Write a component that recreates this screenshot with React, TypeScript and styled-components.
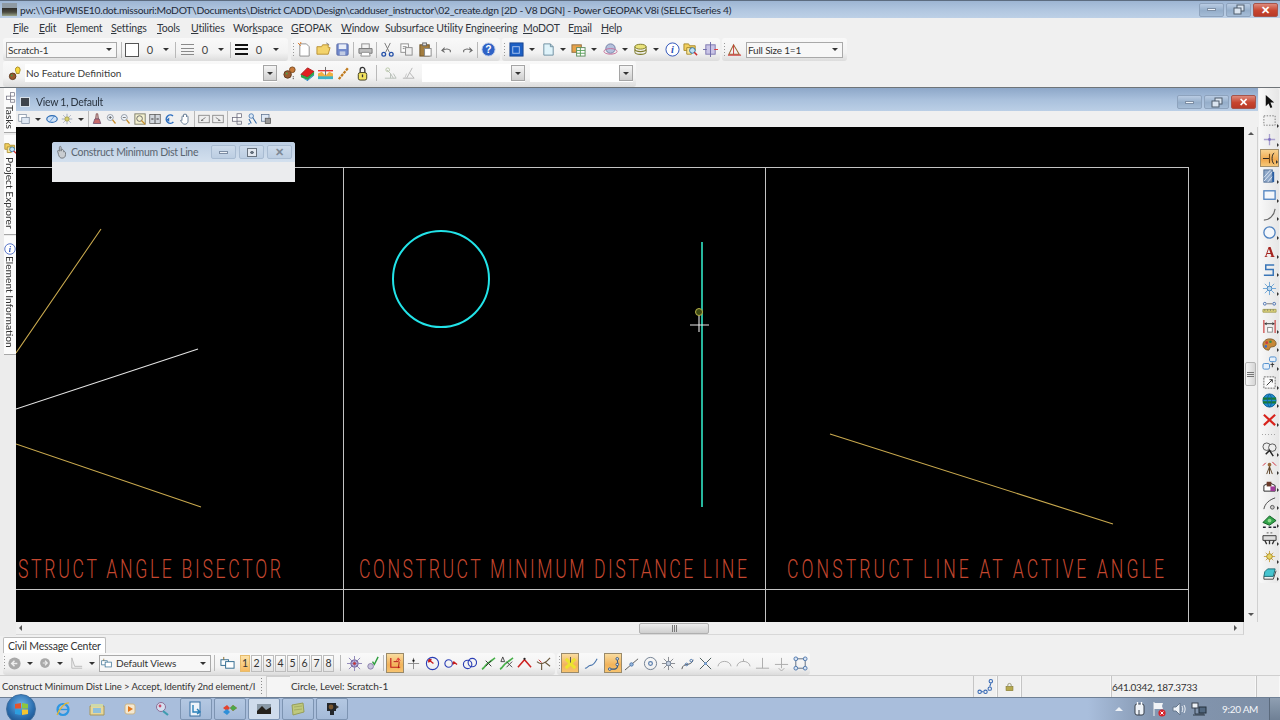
import React from 'react';
import styled, { createGlobalStyle } from 'styled-components';

const uiFont = "Lato, 'Liberation Sans', Arial, sans-serif";

const GlobalStyle = createGlobalStyle`
	html, body, #root {
		margin: 0;
		padding: 0;
		height: 100%;
		overflow: hidden;
	}
	body {
		font-family: ${uiFont};
		font-size: 11px;
		color: #2a2f36;
		background: #f0f0f0;
	}
`;

const Shell = styled.div`
	display: flex;
	flex-direction: column;
	width: 1280px;
	height: 720px;
	overflow: hidden;
	filter: blur(0.35px);
`;

const TitleBar = styled.div`
	display: flex;
	align-items: center;
	height: 18px;
	padding: 0 2px;
	box-sizing: border-box;
	border-top: 1px solid #5d6c80;
	background: linear-gradient(#9db5d3, #b3c8e1 60%, #bdd0e6);
`;

const AppThumb = styled.div`
	width: 15px;
	height: 13px;
	margin-right: 3px;
	background: linear-gradient(#8f9aa3 35%, #2c2a27 36%, #4a4a40 70%, #9ba58a);
`;

const TitleText = styled.span`
	font-size: 10.3px;
	letter-spacing: -0.28px;
	white-space: nowrap;
	color: #1f2a38;
`;

const WinButtons = styled.div<{ $gap?: number }>`
	display: flex;
	gap: ${(p) => p.$gap ?? 2}px;
	margin-left: auto;
`;

const WinBtn = styled.div<{ $close?: boolean; $faint?: boolean }>`
	display: flex;
	align-items: center;
	justify-content: center;
	width: 25px;
	height: 14px;
	border: 1px solid ${(p) => (p.$close ? '#a5554c' : p.$faint ? '#a9bcd2' : '#8ea3bd')};
	border-radius: 2px;
	box-sizing: border-box;
	background: ${(p) =>
		p.$close
			? 'linear-gradient(#dd8a7c, #c7452f 55%, #b93a28)'
			: p.$faint
				? 'linear-gradient(#cddbeb, #bccee2)'
				: 'linear-gradient(#b9cce3, #95aeca 55%, #a5bcd6)'};
`;

const MenuBar = styled.div`
	display: flex;
	align-items: center;
	height: 20px;
	padding-left: 13px;
	box-sizing: border-box;
	background: #f0f0f0;
`;

const MenuItem = styled.span<{ $gap: number }>`
	width: ${(p) => p.$gap}px;
	flex: none;
	white-space: nowrap;
	font-size: 10.5px;
	letter-spacing: -0.2px;
	color: #30363d;
`;

const ToolRow = styled.div<{ $h: number }>`
	display: flex;
	height: ${(p) => p.$h}px;
	box-sizing: border-box;
	background: #f0f0f0;
`;

const Band = styled.div<{ $w: number; $ml?: number; $pb?: number }>`
	display: flex;
	align-items: center;
	flex: none;
	width: ${(p) => p.$w}px;
	margin-left: ${(p) => p.$ml ?? 0}px;
	padding-bottom: ${(p) => p.$pb ?? 0}px;
	box-sizing: border-box;
	border-radius: 3px;
	background: linear-gradient(#f9f9f9, #f2f2f2 65%, #dcdcdc);
`;

const Slot = styled.div<{ $w?: number; $on?: boolean }>`
	display: flex;
	align-items: center;
	justify-content: center;
	flex: none;
	width: ${(p) => p.$w ?? 18}px;
	height: ${(p) => (p.$on ? 20 : 18)}px;
	box-sizing: border-box;
	font-size: 11px;
	color: #444;
	${(p) =>
		p.$on &&
		`background: linear-gradient(#f9dca0, #f2b35a 60%, #f6c36f);
		border: 1px solid #9a8a6a;`}
`;

const Caret = styled.i`
	width: 0;
	height: 0;
	border-left: 3px solid transparent;
	border-right: 3px solid transparent;
	border-top: 3px solid #333;
`;

const Grip = styled.div<{ $w?: number }>`
	flex: none;
	width: ${(p) => p.$w ?? 4}px;
	height: 14px;
	background: repeating-linear-gradient(#9a9a9a 0 1px, transparent 1px 3px) no-repeat center / 1px 100%;
`;

const Divider = styled.div<{ $w?: number }>`
	flex: none;
	width: ${(p) => p.$w ?? 3}px;
	height: 16px;
	background: linear-gradient(#b9b9b9, #b9b9b9) no-repeat center / 1px 100%;
`;

const Combo = styled.div<{ $w: number; $h?: number; $ml?: number }>`
	display: flex;
	align-items: center;
	flex: none;
	width: ${(p) => p.$w}px;
	height: ${(p) => p.$h ?? 16}px;
	margin-left: ${(p) => p.$ml ?? 0}px;
	padding-left: 1px;
	box-sizing: border-box;
	border: 1px solid #a9a9a9;
	background: #f7f7f7;
	font-size: 10px;
	letter-spacing: -0.2px;
	color: #333;
`;

const ComboCaret = styled(Caret)`
	margin-left: auto;
	margin-right: 4px;
	flex: none;
`;

const FeatureCombo = styled.div<{ $w: number; $ml?: number }>`
	display: flex;
	align-items: center;
	flex: none;
	width: ${(p) => p.$w}px;
	height: 18px;
	margin-left: ${(p) => p.$ml ?? 0}px;
	box-sizing: border-box;
	background: #fff;
	font-size: 10px;
	color: #3b3b3b;
`;

const ComboKey = styled.div`
	display: flex;
	align-items: center;
	justify-content: center;
	width: 14px;
	height: 16px;
	margin-left: auto;
	flex: none;
	border: 1px solid #a5a5a5;
	box-sizing: border-box;
	background: linear-gradient(#f5f5f5, #cfcfcf);
`;

const FeatureText = styled.span`
	padding-left: 1px;
`;

const RowRule = styled.div`
	height: 1px;
	background: #6f7478;
`;

const Main = styled.div`
	display: flex;
	flex: 1;
	min-height: 0;
`;

const TabStrip = styled.div`
	display: flex;
	flex-direction: column;
	flex: none;
	width: 16px;
	background: #ececec;
`;

const SideTab = styled.div<{ $h: number; $pt: number; $mb: number }>`
	display: flex;
	flex-direction: column;
	align-items: center;
	height: ${(p) => p.$h}px;
	margin: 0 0 ${(p) => p.$mb}px 4px;
	padding-top: ${(p) => p.$pt}px;
	box-sizing: border-box;
	border-bottom: 1px solid #a7a7a7;
	background: #fbfbfb;
`;

const SideLabel = styled.span<{ $mt: number }>`
	writing-mode: vertical-rl;
	font-size: 10.2px;
	margin-top: ${(p) => p.$mt}px;
	color: #333;
	white-space: nowrap;
`;

const ViewColumn = styled.div`
	display: flex;
	flex-direction: column;
	width: 1242px;
	flex: none;
`;

const ViewTitle = styled.div`
	display: flex;
	align-items: center;
	height: 23px;
	padding: 5px 2px 0 4px;
	box-sizing: border-box;
	background: linear-gradient(#8da7c8, #a9c0dc 50%, #bbcfe6);
`;

const ViewGlyph = styled.div`
	width: 8px;
	height: 8px;
	margin-right: 6px;
	border: 1px solid #d7e0ea;
	background: #3f444b;
`;

const ViewName = styled.span`
	font-size: 10.5px;
	letter-spacing: -0.3px;
	color: #2a3440;
`;

const ViewTools = styled.div`
	display: flex;
	align-items: center;
	height: 16px;
	background: #f0f0f0;
`;

const CanvasRow = styled.div`
	display: flex;
	height: 495px;
`;

const Canvas = styled.div`
	position: relative;
	width: 1228px;
	height: 495px;
	background: #000;
	flex: none;
`;

const Drawing = styled.svg`
	display: block;
`;

const ScrollColumn = styled.div`
	display: flex;
	flex-direction: column;
	align-items: center;
	width: 14px;
	flex: none;
	background: #f0f0f0;
	border-right: 1px solid #d0d0d0;
	box-sizing: border-box;
`;

const ThumbV = styled.div`
	display: flex;
	align-items: center;
	justify-content: center;
	width: 11px;
	height: 24px;
	margin-top: 227px;
	border: 1px solid #b5b5b5;
	border-radius: 2px;
	box-sizing: border-box;
	background: linear-gradient(90deg, #f6f6f6, #d6d6d6);
`;

const ArrowUp = styled.i`
	margin-top: 5px;
	border-left: 3px solid transparent;
	border-right: 3px solid transparent;
	border-bottom: 3px solid #555;
`;

const ArrowDown = styled.i`
	margin-top: auto;
	margin-bottom: 6px;
	border-left: 3px solid transparent;
	border-right: 3px solid transparent;
	border-top: 3px solid #555;
`;

const HScroll = styled.div`
	display: flex;
	align-items: center;
	height: 13px;
	width: 1228px;
	box-sizing: border-box;
	padding: 0 6px 0 3px;
	border-right: 1px solid #d0d0d0;
	border-bottom: 1px solid #d8d8d8;
	background: #f0f0f0;
`;

const ArrowLeft = styled.i`
	border-top: 3px solid transparent;
	border-bottom: 3px solid transparent;
	border-right: 3px solid #555;
`;

const ArrowRight = styled.i`
	margin-left: auto;
	border-top: 3px solid transparent;
	border-bottom: 3px solid transparent;
	border-left: 3px solid #555;
`;

const ThumbH = styled.div`
	display: flex;
	align-items: center;
	justify-content: center;
	width: 70px;
	height: 11px;
	margin-left: 617px;
	border: 1px solid #b0b0b0;
	border-radius: 2px;
	box-sizing: border-box;
	background: linear-gradient(#ededed, #cfcfcf);
`;

const Ridges = styled.div<{ $v?: boolean }>`
	width: ${(p) => (p.$v ? 7 : 5)}px;
	height: ${(p) => (p.$v ? 5 : 7)}px;
	background: ${(p) =>
		p.$v
			? 'repeating-linear-gradient(#777 0 1px, transparent 1px 2px)'
			: 'repeating-linear-gradient(90deg, #777 0 1px, transparent 1px 2px)'};
`;

const FloatDialog = styled.div`
	position: absolute;
	left: 36px;
	top: 15px;
	width: 243px;
	height: 40px;
	border-radius: 3px 3px 0 0;
	background: #ebecee;
	overflow: hidden;
`;

const DialogTitle = styled.div`
	display: flex;
	align-items: center;
	height: 20px;
	padding: 0 3px 0 3px;
	box-sizing: border-box;
	background: linear-gradient(#bccee3, #d3e0ee);
`;

const DialogName = styled.span`
	margin-left: 2px;
	font-size: 10.5px;
	letter-spacing: -0.3px;
	color: #5a6570;
`;

const PaletteColumn = styled.div`
	display: flex;
	flex-direction: column;
	flex: none;
	width: 22px;
	background: #f0f0f0;
`;

const Palette = styled.div`
	display: flex;
	flex-direction: column;
	align-items: center;
	width: 20px;
	margin-left: 1px;
	padding-top: 4.6px;
	border-radius: 3px;
	background: linear-gradient(90deg, #f8f8f8, #e6e6e6);
`;

const PaletteSlot = styled.div<{ $on?: boolean; $more?: boolean; $h?: number }>`
	position: relative;
	display: flex;
	align-items: center;
	justify-content: center;
	width: 19px;
	height: ${(p) => p.$h ?? 18.7}px;
	box-sizing: border-box;
	${(p) =>
		p.$on &&
		`background: linear-gradient(#f8d28f, #f0a94f 60%, #f6c878);
		border: 1px solid #a3906c;`}
	${(p) =>
		p.$more &&
		`&::after {
			content: '';
			position: absolute;
			right: 0;
			bottom: 2px;
			border-left: 2px solid #333;
			border-top: 2px solid transparent;
			border-bottom: 2px solid transparent;
		}`}
`;

const PaletteGrip = styled.div`
	width: 14px;
	height: 6px;
	margin: 3px 0;
	background: repeating-linear-gradient(90deg, #a5a5a5 0 1px, transparent 1px 3px) no-repeat center / 100% 1px;
`;

const TabRow = styled.div`
	display: flex;
	align-items: flex-end;
	height: 17px;
	padding-left: 3px;
	background: #f0f0f0;
`;

const MsgTab = styled.div`
	display: flex;
	align-items: center;
	width: 103px;
	height: 16px;
	padding-left: 4px;
	box-sizing: border-box;
	border: 1px solid #bcbcbc;
	border-bottom: none;
	border-radius: 2px 2px 0 0;
	background: #fff;
	font-size: 10.5px;
	letter-spacing: -0.22px;
	white-space: nowrap;
	color: #333;
`;

const PageBtn = styled.div<{ $on?: boolean }>`
	display: flex;
	align-items: center;
	justify-content: center;
	flex: none;
	width: ${(p) => (p.$on ? 10 : 11)}px;
	height: 17px;
	margin-right: 1px;
	border: 1px solid ${(p) => (p.$on ? '#e6bb6c' : '#bdbdbd')};
	box-sizing: border-box;
	font-size: 10.5px;
	color: #333;
	background: ${(p) => (p.$on ? 'linear-gradient(#fde2a8, #f6bb62)' : 'linear-gradient(#fbfbfb, #e4e4e4)')};
`;

const StatusBar = styled.div`
	display: flex;
	align-items: stretch;
	height: 22px;
	border-top: 1px solid #cfcfcf;
	box-sizing: border-box;
	background: #f0f0f0;
	font-size: 10px;
	color: #333;
`;

const Prompt = styled.div`
	width: 256px;
	padding-left: 2px;
	flex: none;
	white-space: nowrap;
	line-height: 21px;
	font-size: 9.5px;
	letter-spacing: -0.1px;
	box-sizing: border-box;
`;

const StatusCell = styled.div<{ $w: number; $first?: boolean }>`
	display: flex;
	align-items: center;
	justify-content: ${(p) => (p.$w < 40 ? 'center' : 'flex-start')};
	flex: none;
	width: ${(p) => p.$w}px;
	margin-left: ${(p) => (p.$first ? 'auto' : '0')};
	box-sizing: border-box;
	border-left: 1px solid #c5c5c5;
	border-right: 1px solid #f8f8f8;
	letter-spacing: -0.3px;
	white-space: nowrap;
`;

const StatusGrip = styled.div`
	width: 1px;
	margin: 2px 4px 2px 5px;
	flex: none;
	background: repeating-linear-gradient(#8a8a8a 0 1px, transparent 1px 3px);
`;

const StatusBox = styled.div`
	width: 23px;
	flex: none;
	border-left: 1px solid #cfcfcf;
	border-top: 1px solid #cfcfcf;
	background: #f5f5f5;
`;

const StatusText = styled.span<{ $ml?: number }>`
	margin-left: ${(p) => p.$ml ?? 0}px;
	line-height: 21px;
	letter-spacing: -0.1px;
	white-space: nowrap;
`;

const Taskbar = styled.div`
	display: flex;
	align-items: center;
	height: 23px;
	box-sizing: border-box;
	border-top: 1px solid #6f8095;
	background: linear-gradient(90deg, #a9bedc 0, #a9bedc 85%, #8497b1 90%, #7d8ea5 100%);
`;

const StartOrb = styled.div`
	display: flex;
	align-items: center;
	justify-content: center;
	width: 30px;
	height: 30px;
	margin-left: 6px;
	flex: none;
	border-radius: 50%;
	background: radial-gradient(circle at 50% 35%, #6fb3e8, #2b6fb0 55%, #173f73);
	border: 1px solid #3d6d9e;
	box-sizing: border-box;
`;

const TaskSlot = styled.div<{ $w: number; $ml?: number }>`
	display: flex;
	align-items: center;
	justify-content: center;
	flex: none;
	width: ${(p) => p.$w}px;
	margin-left: ${(p) => p.$ml ?? 0}px;
`;

const TaskBtn = styled.div<{ $bright?: boolean }>`
	display: flex;
	align-items: center;
	justify-content: center;
	flex: none;
	width: 32px;
	height: 22px;
	margin-right: 2px;
	border: 1px solid #7d94b2;
	border-radius: 2px;
	box-sizing: border-box;
	background: ${(p) => (p.$bright ? '#cfdcec' : 'linear-gradient(#b4c8e2, #a4bad8)')};
`;

const TrayArrow = styled.i`
	margin-left: 765px;
	border-left: 4px solid transparent;
	border-right: 4px solid transparent;
	border-bottom: 4px solid #eef2f7;
`;

const Clock = styled.span`
	margin-left: 13px;
	width: 44px;
	flex: none;
	color: #f4f6f9;
	font-size: 10px;
	letter-spacing: -0.3px;
	white-space: nowrap;
`;

const ShowDesktop = styled.div`
	width: 10px;
	height: 22px;
	margin-left: auto;
	flex: none;
	border-left: 1px solid #5b6a7c;
	background: linear-gradient(#8f9fb2, #6f8095);
`;

const icons: Record<string, React.ReactNode> = {
	new: <><path d="M3 2h7l3 3v10H3z" fill="#fff" stroke="#8d8d8d" /><path d="M1 1l3 3M4 0v2" stroke="#e0761c" /></>,
	open: <><path d="M1 5h5l1-2h6v3h2l-2 7H1z" fill="#f3d36b" stroke="#b99032" /><path d="M11 1l3 2" stroke="#777" /></>,
	save: <><rect x="2" y="2" width="12" height="12" rx="1" fill="#7189cc" stroke="#5a6ba5" /><rect x="4" y="2.5" width="8" height="5" fill="#e9eef8" /><rect x="5" y="10" width="6" height="4" fill="#c1cbe3" /></>,
	print: <><rect x="4" y="2" width="8" height="5" fill="#f3f3f3" stroke="#8e8e8e" /><path d="M1 7h14v5H1z" fill="#bdbdbd" stroke="#777" /><path d="M4 11h8l1 4H3z" fill="#fff" stroke="#8e8e8e" /></>,
	cut: <><path d="M5 1l5 10M11 1L6 11" stroke="#777" /><circle cx="4" cy="13" r="2" stroke="#2450a8" strokeWidth="1.4" /><circle cx="12" cy="13" r="2" stroke="#2450a8" strokeWidth="1.4" /></>,
	copy: <><rect x="2" y="2" width="8" height="9" fill="#fff" stroke="#8c8c8c" /><rect x="7" y="6" width="7" height="8" fill="#f0f0f0" stroke="#8c8c8c" /><path d="M4 5h4M4 7h2" stroke="#888" /></>,
	paste: <><rect x="2" y="3" width="10" height="12" fill="#a37d3f" stroke="#6d5228" /><rect x="5" y="1" width="4" height="3" fill="#ddd" stroke="#666" /><rect x="7" y="7" width="7" height="8" fill="#fff" stroke="#888" /></>,
	undo: <path d="M5 6l-3 3 3 2M3 9c3-2 6-2 8 0v2" stroke="#666" strokeWidth="1.1" />,
	redo: <path d="M11 6l3 3-3 2M13 9c-3-2-6-2-8 0v2" stroke="#666" strokeWidth="1.1" />,
	help: <><circle cx="8" cy="8" r="7" fill="#2f62c6" stroke="#c2cfe6" /><text x="8" y="12" fontSize="11" fontWeight="700" fill="#fff" textAnchor="middle" fontFamily="Liberation Sans">?</text></>,
	viewBlue: <><rect x="1" y="1" width="14" height="14" fill="#1c5fc4" stroke="#1b4690" /><rect x="4" y="5" width="7" height="7" stroke="#a9c4ef" /></>,
	docs: <><path d="M3 2h7l3 3v9H3z" fill="#dff3fa" stroke="#6d8ea0" /><path d="M10 2v3h3" stroke="#6d8ea0" /></>,
	table: <><rect x="1" y="3" width="10" height="8" fill="#e7a24a" stroke="#907040" /><rect x="6" y="6" width="9" height="9" fill="#fff" stroke="#5b8a5b" /><path d="M6 9h9M6 12h9M10 6v9" stroke="#5aa05a" /></>,
	globeLevel: <><ellipse cx="8" cy="7" rx="5" ry="5" fill="#b4c0dc" stroke="#6f7da3" /><ellipse cx="8" cy="10" rx="7" ry="3" fill="none" stroke="#c46f9a" /></>,
	layers: <><ellipse cx="8" cy="5" rx="6" ry="2.6" fill="#e9e27a" stroke="#7d7a2a" /><path d="M2 8c1 3 11 3 12 0M2 11c1 3 11 3 12 0" stroke="#7d7a2a" strokeWidth="1.2" /><path d="M2 5v6M14 5v6" stroke="#7d7a2a" /></>,
	info: <><circle cx="8" cy="8" r="7" fill="#fff" stroke="#2a4fb8" /><text x="8" y="12" fontSize="11" fontStyle="italic" fontWeight="700" fill="#2a4fb8" textAnchor="middle" fontFamily="Liberation Serif">i</text></>,
	search: <><path d="M1 2h5l1 2h6v5H1z" fill="#f2cf5f" stroke="#a98a2a" /><path d="M4 6h5v7H4z" fill="#f8e79c" stroke="#a98a2a" /><circle cx="10" cy="9" r="3" fill="#bfe0f2" stroke="#2c6fa5" /><path d="M12 11l3 3" stroke="#cc2b2b" strokeWidth="1.6" /></>,
	cube: <><rect x="3" y="3" width="10" height="10" fill="#c9c4e6" stroke="#7e78b0" /><path d="M8 0v16M0 8h4" stroke="#6d6aa8" /><path d="M12 8h4" stroke="#d33" /></>,
	scale: <><path d="M2 13L7 3l6 10z" stroke="#9a6a35" strokeWidth="1.1" /><path d="M1 14h14" stroke="#c33" strokeWidth="1.2" /><path d="M7 3v10" stroke="#c33" /></>,
	bulb: <><circle cx="6" cy="11" r="3.5" fill="#9a5a30" stroke="#5e3a1e" /><circle cx="5" cy="10" r="1" fill="#3fa04c" /><path d="M11 1a3 3 0 013 3c0 2-1 2-1 4h-3c0-2-1-2-1-4a3 3 0 012-3z" fill="#f6d83f" stroke="#a98a1c" /></>,
	feature: <><circle cx="6" cy="9" r="4" fill="#9a5a30" stroke="#5e3a1e" /><circle cx="5" cy="8" r="1" fill="#48a84f" /><circle cx="11" cy="4" r="3" fill="#c77a3a" stroke="#7c4b1f" /><path d="M12 11v4" stroke="#222" strokeDasharray="1 1" /></>,
	layerRed: <><path d="M1 9l7-7 7 4-7 6z" fill="#e31f1f" stroke="#a51515" /><path d="M1 9l7 3 7-6v3l-7 6-7-3z" fill="#2aa44a" /><path d="M3 13l5 2 7-6v1l-7 6z" fill="#1d7bc9" /></>,
	section: <><path d="M0 5h16" stroke="#e23636" strokeWidth="1.5" /><path d="M8 1v13" stroke="#666" /><path d="M0 8l4-2 4 4 4-4 4 2v4H0z" fill="#f0b040" /><path d="M0 11h16v3H0z" fill="#3cb3c9" /></>,
	rope: <path d="M3 14L13 2" stroke="#c07b1e" strokeWidth="2.4" strokeDasharray="3 1" />,
	lock: <><rect x="3.5" y="7" width="9" height="8" rx="2" fill="#f2e360" stroke="#3d3a1a" /><path d="M5.5 7V4a2.5 2.5 0 015 0v3" stroke="#333" strokeWidth="1.4" /><path d="M8 9v3" stroke="#333" strokeWidth="1.4" /></>,
	ghostA: <><path d="M2 13h12M4 4l4 4M8 8v5M11 8l3 5M8 8l3 5" stroke="#b7bfb7" /><circle cx="5" cy="4" r="2" stroke="#b9c6a8" /></>,
	ghostB: <><path d="M2 13h12M12 2L6 13M9 7l5 6" stroke="#b4b4b4" /><path d="M4 13l2-5" stroke="#c6c6c6" /></>,
	win: <><rect x="1" y="2" width="10" height="9" fill="#fff" stroke="#7d8ca0" /><rect x="5" y="6" width="10" height="8" fill="#dfe8f3" stroke="#7d8ca0" /></>,
	disk: <><ellipse cx="8" cy="8" rx="7" ry="4.5" fill="#cfe2f6" stroke="#2d6bb3" strokeWidth="1.5" /><path d="M4 13l8-10" stroke="#3d7ec8" /></>,
	sun: <><circle cx="8" cy="8" r="3" fill="#d9cf6a" stroke="#8c8a4a" /><path d="M8 1v3M8 12v3M1 8h3M12 8h3M3 3l2 2M11 11l2 2M13 3l-2 2M3 13l2-2" stroke="#8a96b0" /></>,
	paint: <><path d="M7 1h2l1 7H6z" fill="#c9a7a7" stroke="#7c4b4b" /><path d="M3 14l2-6h6l2 6z" fill="#c96a6a" stroke="#6c4b6b" /></>,
	zoomIn: <><circle cx="7" cy="6" r="4" fill="#eef4fa" stroke="#7d8794" /><path d="M5 6h4M7 4v4" stroke="#555" /><path d="M10 9l4 5" stroke="#c9902f" strokeWidth="1.7" /></>,
	zoomOut: <><circle cx="7" cy="6" r="4" fill="#eef4fa" stroke="#7d8794" /><path d="M5 6h4" stroke="#555" /><path d="M10 9l4 5" stroke="#c9902f" strokeWidth="1.7" /></>,
	fit: <><rect x="2" y="2" width="11" height="11" fill="#f4f1d0" stroke="#7d7d6a" /><circle cx="7" cy="7" r="3" stroke="#666" /><path d="M9 9l4 4" stroke="#c9902f" strokeWidth="1.4" /></>,
	split: <><rect x="1" y="2" width="14" height="12" fill="#d2d7dd" stroke="#555" /><path d="M8 2v12" stroke="#333" /><path d="M3 8h3M10 8h3" stroke="#333" strokeWidth="1.5" /></>,
	rotate: <><path d="M12 4a5.5 5.5 0 10.5 8" stroke="#2e6fc0" strokeWidth="2" /><path d="M7 6l-4 3 4 3z" fill="#2e6fc0" /></>,
	hand: <path d="M4 9V5a1 1 0 012 0V2.5a1 1 0 012 0V2.5a1 1 0 012 0V5a1 1 0 012 0v6c0 2-2 4-4 4-3 0-4-2-6-5 1-1 2 0 2 0z" fill="#fff" stroke="#47617f" />,
	prev: <><rect x="1" y="3" width="14" height="10" fill="#eee" stroke="#777" /><path d="M4 10l6-4M4 10h3" stroke="#666" /></>,
	next: <><rect x="1" y="3" width="14" height="10" fill="#eee" stroke="#777" /><path d="M5 6l6 4M11 10H8" stroke="#666" /></>,
	boxes: <><rect x="8" y="1" width="6" height="5" fill="#fff" stroke="#667" /><rect x="2" y="6" width="6" height="5" fill="#fff" stroke="#667" /><path d="M8 11h6v4H8z" stroke="#667" /></>,
	walk: <><circle cx="7" cy="4" r="3" fill="#dce8f5" stroke="#3a6ea8" /><path d="M9 6l5 8M4 8l3 6M5 14l-2 1" stroke="#3a6ea8" strokeWidth="1.4" /></>,
	copyView: <><rect x="2" y="2" width="10" height="9" fill="#dfe9f5" stroke="#5d7390" /><rect x="7" y="7" width="7" height="7" fill="#999" stroke="#555" /></>,
	arrow: <path d="M4 1v12l3-3 2 5 2-1-2-5h4z" fill="#111" />,
	selrect: <rect x="2" y="3" width="12" height="10" stroke="#777" strokeDasharray="1.5 1.5" />,
	crossPt: <><path d="M8 2v12M2 8h12" stroke="#a9a0cf" strokeWidth="1.4" /><circle cx="8" cy="8" r="1.5" fill="#7c6fbf" /></>,
	caliper: <><path d="M1 8h7" stroke="#222" /><path d="M8 3v10" stroke="#7a4a10" strokeWidth="1.2" /><path d="M13 2c-3 2-3 10 0 12" stroke="#222" /></>,
	pattern: <><rect x="2" y="1" width="9" height="13" fill="#8fa8c8" stroke="#4c6b92" /><path d="M2 9l7-8M2 13l9-10M6 14l6-7" stroke="#dfe9f5" /><path d="M12 3v11" stroke="#2a5fa5" strokeWidth="2" /></>,
	rect: <rect x="2" y="3" width="12" height="9" fill="#f4f7fb" stroke="#4f82c0" strokeWidth="1.4" />,
	arc: <path d="M2 14c6 0 11-5 12-12" stroke="#666" strokeWidth="1.2" />,
	circle: <circle cx="8" cy="8" r="6" fill="#f4f7fb" stroke="#4f82c0" strokeWidth="1.4" />,
	letterA: <text x="8" y="14" fontSize="15" fontWeight="700" fill="#a5241f" textAnchor="middle" fontFamily="Liberation Serif">A</text>,
	stair: <path d="M13 2H4v5h8v6H2" stroke="#3a76b8" strokeWidth="1.6" />,
	star: <><path d="M8 1v14M1 8h14M3 3l10 10M13 3L3 13" stroke="#6ea6d8" /><circle cx="8" cy="8" r="2.5" fill="#bcd7ee" stroke="#4a86bd" /></>,
	dotsYellow: <><circle cx="3" cy="4" r="1.5" stroke="#4a70b0" /><path d="M5 4h6" stroke="#777" /><circle cx="13" cy="4" r="1.5" stroke="#4a70b0" /><path d="M1 10h14v3H1z" fill="#dcd27a" stroke="#a8a25c" /><path d="M3 10v1.5M6 10v1.5M9 10v1.5M12 10v1.5" stroke="#776" /></>,
	dimension: <><path d="M2 1v14M14 1v14" stroke="#c44" strokeWidth="1.3" /><path d="M3 5h10M3 5l2-1M3 5l2 1M13 5l-2-1M13 5l-2 1" stroke="#333" /><rect x="6" y="9" width="5" height="5" fill="#fff" stroke="#888" /></>,
	palette: <><path d="M8 2c-4 0-7 3-7 6 0 4 3 6 6 6 1 0 1-2 2-3 2-1 6 0 6-4 0-3-3-5-7-5z" fill="#c78838" stroke="#7c5a26" /><circle cx="5" cy="6" r="1.4" fill="#cc3b3b" /><circle cx="9" cy="5" r="1.4" fill="#3b8a4b" /><circle cx="4" cy="10" r="1.4" fill="#3b6fcc" /></>,
	linked: <><rect x="8" y="1" width="7" height="5" rx="1.5" fill="#e6f0fa" stroke="#4b8ccc" /><rect x="1" y="8" width="7" height="6" rx="1.5" fill="#e6f0fa" stroke="#4b8ccc" /><path d="M9 9h4M11 7v5" stroke="#333" /></>,
	frameArrow: <><rect x="2" y="2" width="12" height="12" fill="#fbfbfb" stroke="#666" strokeDasharray="2 1" /><path d="M5 11l6-6M8 5h3v3" stroke="#333" /></>,
	globe: <><circle cx="8" cy="8" r="7" fill="#1f8fd0" stroke="#0f5e96" /><path d="M1 6h14M1 10h14" stroke="#1a7a36" strokeWidth="2.2" /><path d="M8 1c-3 3-3 11 0 14M8 1c3 3 3 11 0 14" stroke="#0f5e96" /></>,
	redX: <path d="M2 3l12 11M14 3L2 14" stroke="#d8231c" strokeWidth="2.3" />,
	wheels: <><circle cx="5" cy="5" r="4" fill="#eee" stroke="#555" /><circle cx="11" cy="6" r="4" fill="#eee" stroke="#555" /><path d="M4 13l4-4 4 6" stroke="#222" strokeWidth="1.6" /></>,
	surveyor: <><circle cx="8" cy="5" r="2" fill="#9a6a3a" /><path d="M8 7l-3 8M8 7l3 8M8 7v8" stroke="#5a4024" /><path d="M1 6l3-3M11 2l4 4" stroke="#c23" /></>,
	stack: <><path d="M2 8l6-3 6 3v6H2z" fill="#fff" stroke="#222" /><path d="M5 4h5v5H5z" fill="#6a3a2a" /><rect x="9" y="9" width="5" height="5" fill="#a03a9a" /></>,
	curvePt: <><path d="M2 14C3 8 8 4 14 2" stroke="#444" /><circle cx="11" cy="12" r="2" fill="#ccc" stroke="#555" /></>,
	money: <><path d="M1 9l7-7 7 5-7 5z" fill="#34a34a" stroke="#0d5d22" /><circle cx="8" cy="7" r="2" fill="#8fdb8f" /><path d="M1 14h3M7 14h3M12 14h3" stroke="#223" strokeWidth="1.6" /></>,
	road: <><path d="M1 5h14v5H1z" fill="#ddd" stroke="#333" /><path d="M3 10l2 4M13 10l-2 4M8 10v4" stroke="#333" strokeWidth="1.4" /><path d="M5 2h2M9 2h2" stroke="#555" /></>,
	spark: <><path d="M8 2v12M2 8h12M4 4l8 8M12 4l-8 8" stroke="#c9a54a" /><circle cx="8" cy="8" r="3" fill="#e7d465" stroke="#a98b2a" /></>,
	sheet: <><path d="M3 5l3-3h8l-2 8H2z" fill="#46c4cf" stroke="#1a6a72" /><path d="M2 10v3h10l3-9" stroke="#444" /></>,
	backNav: <><circle cx="8" cy="8" r="6.5" fill="#a9a9a9" /><path d="M11 8H5M8 5L5 8l3 3" stroke="#eee" strokeWidth="1.6" /></>,
	fwdNav: <><circle cx="8" cy="8" r="6.5" fill="#a9a9a9" /><path d="M5 8h6M8 5l3 3-3 3" stroke="#eee" strokeWidth="1.6" /></>,
	angle: <path d="M3 2l3 9h8M3 2v11h11" stroke="#b9b9b9" />,
	twoWin: <><rect x="1" y="4" width="8" height="6" fill="#fff" stroke="#2f6a8f" /><rect x="6" y="6" width="9" height="7" fill="#fff" stroke="#2f6a8f" /><path d="M4 1v3" stroke="#8a6a2a" /></>,
	gear: <><circle cx="8" cy="8" r="4" fill="#bcb0da" stroke="#6a5e98" /><path d="M8 0v16M0 8h16M2 2l12 12M14 2L2 14" stroke="#8d84b5" /><circle cx="8" cy="8" r="1.4" fill="#c33" /></>,
	check: <><circle cx="6" cy="11" r="3" fill="#c9c4dd" stroke="#877fa8" /><path d="M8 6l2 3 4-8" stroke="#2f9e3f" strokeWidth="1.5" /></>,
	axis: <><path d="M3 2v10h10" stroke="#c21d1d" strokeWidth="1.2" /><path d="M12 6l-1 7M6 6h5" stroke="#b21515" /><path d="M11 3v3M9 5l2-3 2 3" stroke="#d33" /></>,
	crossDot: <><path d="M8 2v12M2 8h12" stroke="#8a8a8a" /><circle cx="8" cy="5" r="1.2" fill="#111" /></>,
	circArrow: <><circle cx="8" cy="8" r="6.5" stroke="#2c3fb5" strokeWidth="1.2" /><path d="M4 4l5 4M4 4h3M4 4v3" stroke="#c81e1e" strokeWidth="1.4" /></>,
	circTick: <><circle cx="6" cy="8" r="4" stroke="#2c3fb5" strokeWidth="1.2" /><path d="M11 6l4 3M11 6v3" stroke="#c81e1e" strokeWidth="1.4" /></>,
	twoCirc: <><circle cx="6" cy="9" r="4.5" stroke="#2c3fb5" strokeWidth="1.2" /><circle cx="11" cy="7" r="4.5" stroke="#2c3fb5" strokeWidth="1.2" /></>,
	snakeA: <><path d="M1 14c3-1 4-5 6-6 2-1 5-4 8-6" stroke="#49b04a" strokeWidth="1.8" /><path d="M5 5l6 6M11 5l-6 6" stroke="#333" /></>,
	snakeB: <><path d="M1 14c3-1 4-5 6-6 2-1 5-4 8-6" stroke="#49b04a" strokeWidth="1.8" /><path d="M4 1L2 6h4zM8 6l6 6M14 6l-6 6" stroke="#444" /></>,
	peak: <><path d="M1 12L8 4l7 8" stroke="#cd2121" strokeWidth="1.6" /><circle cx="8" cy="3" r="1.2" fill="#222" /></>,
	branch: <><path d="M1 6c4 4 9 2 14-4M6 8v7M10 7l5 4" stroke="#6b5a3e" strokeWidth="1.2" /><path d="M3 4l3 3" stroke="#c22" /></>,
	xYellow: <><path d="M3 3l10 10M13 3L3 13" stroke="#ece32f" strokeWidth="3.4" /><path d="M8 1v6" stroke="#555" /></>,
	curveA: <path d="M1 13c3 0 3-3 6-3s5-3 7-7" stroke="#4975ad" strokeWidth="1.1" />,
	boxCurve: <><path d="M3 14h6c4 0 4-5 3-11" stroke="#35567f" strokeWidth="1.1" /><circle cx="12" cy="3" r="1.4" fill="#d8e4f0" stroke="#35567f" /><circle cx="12" cy="9" r="1.4" fill="#d8e4f0" stroke="#35567f" /><circle cx="4" cy="14" r="1.4" fill="#d8e4f0" stroke="#35567f" /></>,
	slash: <><path d="M1 15L15 3" stroke="#555" /><circle cx="8" cy="9" r="1.8" fill="#9ab8dc" stroke="#4d76ac" /></>,
	target: <><circle cx="8" cy="8" r="6.5" stroke="#6d7c8f" /><circle cx="8" cy="8" r="2" stroke="#5a7ead" strokeWidth="1.3" /></>,
	gearBlue: <><path d="M8 1v14M1 8h14M3 3l10 10M13 3L3 13" stroke="#86898e" /><circle cx="8" cy="8" r="2.4" fill="#c5d0e0" stroke="#6f7f95" /></>,
	sCurve: <><path d="M2 14c1-8 10-2 12-10" stroke="#555" /><circle cx="7" cy="9" r="1.4" stroke="#4d76ac" /><circle cx="12" cy="5" r="1.4" stroke="#4d76ac" /></>,
	xBlue: <><path d="M2 2l12 12M14 2L2 14" stroke="#455" /><circle cx="8" cy="8" r="1.6" fill="#7aa4d8" /></>,
	arcBase: <path d="M1 11c1-7 13-7 14 0" stroke="#aaa" />,
	arcTop: <><path d="M1 11c1-7 13-7 14 0" stroke="#aaa" /><path d="M8 6v-3" stroke="#aaa" /></>,
	perp: <path d="M1 13h14M8 2v11" stroke="#aaa" />,
	perpDot: <><path d="M1 9h14M8 2v11" stroke="#aaa" /><path d="M5 13l3 3 3-3" stroke="#aaa" /></>,
	square4: <><rect x="3" y="3" width="10" height="10" stroke="#5c6b80" /><circle cx="3" cy="3" r="2" fill="#d8e4f4" stroke="#4d76ac" /><circle cx="13" cy="3" r="2" fill="#d8e4f4" stroke="#4d76ac" /><circle cx="3" cy="13" r="2" fill="#d8e4f4" stroke="#4d76ac" /><circle cx="13" cy="13" r="2" fill="#d8e4f4" stroke="#4d76ac" /></>,
	ie: <><circle cx="8" cy="8.5" r="5.5" stroke="#2d97e2" strokeWidth="2.2" /><path d="M3 8.5h10" stroke="#2d97e2" strokeWidth="1.4" /><path d="M14 2c-4-1-9 5-12 12" stroke="#e7b62d" strokeWidth="1.2" /></>,
	explorer: <><path d="M1 5h14v9H1z" fill="#e6d79a" stroke="#a7965a" /><path d="M2 3h12v3H2z" fill="#cfd9a8" /><rect x="4" y="7" width="8" height="5" fill="#8fc0dc" /></>,
	media: <><rect x="3" y="3" width="10" height="10" rx="2" fill="#f4e8d0" stroke="#c9b488" /><path d="M6 5l5 3-5 3z" fill="#e4761a" /></>,
	trayPic: <><circle cx="6" cy="6" r="4.5" fill="#d5dff0" stroke="#8c6f96" /><circle cx="5" cy="5" r="1.4" fill="#cc4a6a" /><path d="M8 10l5 4" stroke="#3e9cb0" strokeWidth="2.2" /></>,
	pinned1: <><rect x="2" y="1" width="10" height="14" fill="#edf3fa" stroke="#336d9f" /><path d="M5 4v7h6M9 8l3 3-3 2" stroke="#2980b9" strokeWidth="1.4" /></>,
	pinned2: <><path d="M1 7l4-3 3 3 3-3 4 3-4 3-3-3-3 3z" fill="#e4432f" /><path d="M1 11l4-3 3 3-3 3z" fill="#2f8fd8" /><path d="M8 7l3-3 4 3-4 3z" fill="#4aa84a" /></>,
	pinned3: <><path d="M1 3h14v10H1z" fill="#8a9aa8" /><path d="M1 10l5-5 4 4 5-3v7H1z" fill="#26221d" /></>,
	pinned4: <><path d="M2 4l11-2 1 9-11 3z" fill="#bfc97c" stroke="#969e5a" /><path d="M4 6l8-1M4 9l8-1" stroke="#a5ad66" /></>,
	pinned5: <><rect x="3" y="2" width="9" height="8" fill="#23262a" /><circle cx="7" cy="6" r="2.4" fill="#77552f" /><path d="M6 10h4v4H6z" fill="#23262a" /><path d="M12 4l3 2-3 2z" fill="#3a3a3a" /></>,
	power: <><rect x="4" y="3" width="9" height="11" rx="2" fill="#eef2f7" stroke="#39414c" /><path d="M6.5 1v3M10.5 1v3" stroke="#fff" strokeWidth="1.4" /><path d="M8 9v5" stroke="#39414c" /></>,
	flag: <><path d="M3 1v14" stroke="#eee" /><path d="M3 2h9l-1 3 1 3H3z" fill="#f1f3f6" /><circle cx="11" cy="12" r="3.6" fill="#d7232b" /><path d="M9.5 10.5l3 3M12.5 10.5l-3 3" stroke="#fff" /></>,
	speaker: <><path d="M2 6h3l4-4v12l-4-4H2z" fill="#eef2f7" stroke="#67788d" /><path d="M11 5c1 2 1 4 0 6M13 4c1.5 2.5 1.5 5.5 0 8" stroke="#eef2f7" /></>,
	network: <><rect x="1" y="2" width="6" height="5" fill="#eef2f7" stroke="#3a4350" /><rect x="8" y="6" width="7" height="6" fill="#51677f" stroke="#25303d" /><path d="M4 7v6h9M2 14h12" stroke="#2e3a47" /></>,
	curveStatus: <><circle cx="2.5" cy="13" r="1.6" stroke="#3668b4" /><circle cx="8" cy="13" r="1.6" stroke="#3668b4" /><circle cx="13" cy="3" r="1.6" stroke="#3668b4" /><circle cx="12" cy="10" r="1.6" stroke="#3668b4" /><path d="M4 13h2M13 5l-1 3" stroke="#3668b4" /></>,
	padlock: <><rect x="3" y="8" width="10" height="6" fill="#b6a94d" stroke="#8a7e35" /><path d="M5.5 8V6a2.5 2.5 0 015 0v2" stroke="#8d8d6a" strokeWidth="1.2" /></>,
	gesture: <path d="M5 3c0-2 2-2 2 0v4-1c0-2 3-1 3 1v1c1-1 2 0 2 1v2c0 3-2 4-4 4s-3-1-4-4L3 7c0-1 1-1 2 0z" fill="#c9cdd1" stroke="#6b7177" />,
};

const Ico = ({ n, s = 16 }: { n: string; s?: number }) => (
	<svg width={s} height={s} viewBox="0 0 16 16" fill="none">
		{icons[n]}
	</svg>
);

const MinGlyph = styled.div`
	width: 9px;
	height: 3px;
	background: #eef3f8;
	border: 1px solid #7d8ea4;
	box-sizing: border-box;
`;

const CloseGlyph = styled.span<{ $muted?: boolean }>`
	font-size: 11px;
	line-height: 12px;
	font-weight: 700;
	color: ${(p) => (p.$muted ? '#7f8a96' : '#fff')};
`;

const DialogRestore = styled.div`
	width: 8px;
	height: 7px;
	border: 1px solid #67727e;
	background: radial-gradient(#67727e 1.5px, #e3e9f0 2px);
`;

const RestoreGlyph = () => (
	<svg width="12" height="11" viewBox="0 0 12 11" fill="none">
		<rect x="4" y="1" width="7" height="6" fill="#dbe5f0" stroke="#4f5c6c" />
		<rect x="1" y="4" width="7" height="6" fill="#dbe5f0" stroke="#4f5c6c" />
	</svg>
);

const WindowControls = () => (
	<WinButtons>
		<WinBtn><MinGlyph /></WinBtn>
		<WinBtn><RestoreGlyph /></WinBtn>
		<WinBtn $close><CloseGlyph>✕</CloseGlyph></WinBtn>
	</WinButtons>
);

const menus: [React.ReactNode, number][] = [
	[<><u>F</u>ile</>, 26],
	[<><u>E</u>dit</>, 27],
	[<>E<u>l</u>ement</>, 45],
	[<><u>S</u>ettings</>, 46],
	[<><u>T</u>ools</>, 34],
	[<><u>U</u>tilities</>, 42],
	[<>Wor<u>k</u>space</>, 58],
	[<><u>G</u>EOPAK</>, 50],
	[<><u>W</u>indow</>, 44],
	[<>Subsurface Utility Engineering</>, 138],
	[<><u>M</u>oDOT</>, 45],
	[<>E<u>m</u>ail</>, 33],
	[<><u>H</u>elp</>, 30],
];

const ToolSlots = ({ items }: { items: [string, number][] }) => (
	<>
		{items.map(([name, w], i) =>
			name === '^' ? (
				<Slot key={i} $w={w}><Caret /></Slot>
			) : name === '|' ? (
				<Divider key={i} $w={w} />
			) : name === ':' ? (
				<Grip key={i} $w={w} />
			) : name === '_' ? (
				<Slot key={i} $w={w} />
			) : name.startsWith('*') ? (
				<Slot key={i} $w={w} $on><Ico n={name.slice(1)} s={15} /></Slot>
			) : (
				<Slot key={i} $w={w}><Ico n={name} s={w < 16 ? 12 : 15} /></Slot>
			),
		)}
	</>
);

const Swatch = styled.div`
	width: 12px;
	height: 12px;
	background: #fff;
	border: 1px solid #555;
`;

const StyleLines = styled.div<{ $heavy?: boolean }>`
	width: 13px;
	height: 11px;
	background: ${(p) =>
		p.$heavy
			? 'repeating-linear-gradient(#111 0 2px, transparent 2px 4.5px)'
			: 'repeating-linear-gradient(#8a8a8a 0 1px, transparent 1px 3.5px)'};
`;

const paletteTop: [string, boolean?, boolean?][] = [
	['arrow'], ['selrect', true], ['crossPt', true], ['caliper', true, true], ['pattern', true], ['rect', true],
	['arc', true], ['circle', true], ['letterA', true], ['stair', true], ['star', true], ['dotsYellow', false],
	['dimension', true], ['palette', true], ['linked', true], ['frameArrow', true], ['globe', true], ['redX', true],
];
const paletteBottom: string[] = ['wheels', 'surveyor', 'stack', 'curvePt', 'money', 'road', 'spark', 'sheet'];

const viewTools: [string, number][] = [
	['_', 1], ['win', 14], ['^', 14], ['disk', 14], ['sun', 15], ['^', 13], ['|', 3], ['paint', 14], ['zoomIn', 14], ['zoomOut', 14],
	['fit', 16], ['split', 14], ['rotate', 15], ['hand', 15], ['|', 5], ['prev', 14], ['next', 14], ['|', 5], ['boxes', 14], ['walk', 15], ['copyView', 14],
];

const CadLabel = ({ x, w, children }: { x: number; w: number; children: string }) => (
	<text
		transform={`translate(${x} 578) scale(0.68 1)`}
		textLength={(w - 2) / 0.68}
		lengthAdjust="spacing"
		fontFamily="Roboto, 'Liberation Sans', sans-serif"
		fontWeight={300}
		fontSize={26}
		fill="#c4472f"
	>
		{children}
	</text>
);

export default function App() {
	return (
		<Shell>
			<GlobalStyle />
			<TitleBar>
				<AppThumb />
				<TitleText>
					pw:\\GHPWISE10.dot.missouri:MoDOT\Documents\District CADD\Design\cadduser_instructor\02_create.dgn [2D - V8 DGN] - Power GEOPAK V8i (SELECTseries 4)
				</TitleText>
				<WindowControls />
			</TitleBar>
			<MenuBar>
				{menus.map(([label, w], i) => (
					<MenuItem key={i} $gap={w}>{label}</MenuItem>
				))}
			</MenuBar>
			<ToolRow $h={23}>
				<Band $w={285} $ml={3}>
					<Combo $w={111} $ml={3}>Scratch-1<ComboCaret /></Combo>
					<Divider $w={8} />
					<Slot $w={14}><Swatch /></Slot>
					<Slot $w={22}>0</Slot>
					<Slot $w={10}><Caret /></Slot>
					<Divider $w={9} />
					<Slot $w={14}><StyleLines /></Slot>
					<Slot $w={22}>0</Slot>
					<Slot $w={10}><Caret /></Slot>
					<Divider $w={8} />
					<Slot $w={14}><StyleLines $heavy /></Slot>
					<Slot $w={22}>0</Slot>
					<Slot $w={12}><Caret /></Slot>
				</Band>
				<Band $w={209} $ml={3}>
					<ToolSlots items={[[':', 4], ['new', 18], ['open', 20], ['save', 19], ['|', 3], ['print', 20], ['|', 3], ['cut', 18], ['copy', 20], ['paste', 18], ['|', 4], ['undo', 18], ['redo', 20], ['|', 3], ['help', 18]]} />
				</Band>
				<Band $w={218} $ml={2}>
					<ToolSlots items={[[':', 5], ['viewBlue', 18], ['^', 14], ['docs', 18], ['^', 12], ['table', 18], ['^', 14], ['globeLevel', 18], ['^', 12], ['layers', 18], ['^', 14], ['info', 18], ['search', 18], ['_', 2], ['cube', 18]]} />
				</Band>
				<Band $w={125} $ml={2}>
					<ToolSlots items={[[':', 4], ['scale', 16], ['_', 4]]} />
					<Combo $w={97}>Full Size 1=1<ComboCaret /></Combo>
				</Band>
			</ToolRow>
			<ToolRow $h={26}>
				<Band $w={633} $ml={3} $pb={2}>
					<ToolSlots items={[['_', 3], ['bulb', 17], ['_', 2]]} />
					<FeatureCombo $w={252}>
						<FeatureText>No Feature Definition</FeatureText>
						<ComboKey><Caret /></ComboKey>
					</FeatureCombo>
					<ToolSlots items={[['_', 3], ['feature', 18], ['layerRed', 19], ['section', 17], ['rope', 19], ['lock', 18], ['|', 10], ['ghostA', 18], ['ghostB', 18], ['_', 5]]} />
					<FeatureCombo $w={103}><ComboKey><Caret /></ComboKey></FeatureCombo>
					<FeatureCombo $w={103} $ml={5}><ComboKey><Caret /></ComboKey></FeatureCombo>
				</Band>
			</ToolRow>
			<RowRule />
			<Main>
				<TabStrip>
					<SideTab $h={45} $pt={4} $mb={2}>
						<Ico n="boxes" s={11} />
						<SideLabel $mt={2}>Tasks</SideLabel>
					</SideTab>
					<SideTab $h={100} $pt={7} $mb={1}>
						<Ico n="search" s={13} />
						<SideLabel $mt={2}>Project Explorer</SideLabel>
					</SideTab>
					<SideTab $h={119} $pt={7} $mb={0}>
						<Ico n="info" s={12} />
						<SideLabel $mt={1}>Element Information</SideLabel>
					</SideTab>
				</TabStrip>
				<ViewColumn>
					<ViewTitle>
						<ViewGlyph />
						<ViewName>View 1, Default</ViewName>
						<WindowControls />
					</ViewTitle>
					<ViewTools><ToolSlots items={viewTools} /></ViewTools>
					<CanvasRow>
						<Canvas>
							<Drawing width="1228" height="495" viewBox="16 127 1228 495">
								<g stroke="#c4c4c4" strokeWidth="1" shapeRendering="crispEdges">
									<path d="M16 167.5H1188.5M16 589.5H1188.5M343.5 167V622M765.5 167V622M1188.5 167V622" />
								</g>
								<g strokeWidth="1.1" fill="none">
									<path d="M16 353L101 229M16 444L201 507M830 434L1113 524" stroke="#c9a94e" />
									<path d="M16 409L198 349" stroke="#e4e4e4" />
									<circle cx="441" cy="279" r="48" stroke="#22e3e8" strokeWidth="2" />
									<path d="M702 242V507" stroke="#27b79e" strokeWidth="2" />
									<path d="M699 312V332M690 325H709" stroke="#e8e8e8" />
									<circle cx="699" cy="312" r="3.5" stroke="#b7b04a" fill="#3d4a12" strokeWidth="1" />
								</g>
								<CadLabel x={18} w={265}>STRUCT ANGLE BISECTOR</CadLabel>
								<CadLabel x={359} w={390}>CONSTRUCT MINIMUM DISTANCE LINE</CadLabel>
								<CadLabel x={787} w={379}>CONSTRUCT LINE AT ACTIVE ANGLE</CadLabel>
							</Drawing>
							<FloatDialog>
								<DialogTitle>
									<Ico n="gesture" s={14} />
									<DialogName>Construct Minimum Dist Line</DialogName>
									<WinButtons $gap={3}>
										<WinBtn $faint><MinGlyph /></WinBtn>
										<WinBtn $faint><DialogRestore /></WinBtn>
										<WinBtn $faint><CloseGlyph $muted>✕</CloseGlyph></WinBtn>
									</WinButtons>
								</DialogTitle>
							</FloatDialog>
						</Canvas>
						<ScrollColumn>
							<ArrowUp />
							<ThumbV><Ridges $v /></ThumbV>
							<ArrowDown />
						</ScrollColumn>
					</CanvasRow>
					<HScroll>
						<ArrowLeft />
						<ThumbH><Ridges /></ThumbH>
						<ArrowRight />
					</HScroll>
				</ViewColumn>
				<PaletteColumn>
					<Palette>
						{paletteTop.map(([n, more, on]) => (
							<PaletteSlot key={n} $more={more} $on={on}><Ico n={n} s={15} /></PaletteSlot>
						))}
						<PaletteGrip />
						{paletteBottom.map((n) => (
							<PaletteSlot key={n} $more $h={17.8}><Ico n={n} s={15} /></PaletteSlot>
						))}
					</Palette>
				</PaletteColumn>
			</Main>
			<TabRow><MsgTab>Civil Message Center</MsgTab></TabRow>
			<ToolRow $h={22}>
				<Band $w={552} $ml={3} $pb={2}>
					<ToolSlots items={[[':', 3], ['backNav', 16], ['^', 16], ['fwdNav', 14], ['^', 16], ['angle', 17], ['^', 13]]} />
					<Combo $w={112} $h={17} $ml={1}>
						<Ico n="twoWin" s={11} />
						<StatusText $ml={4}>Default Views</StatusText>
						<ComboCaret />
					</Combo>
					<ToolSlots items={[['|', 7], ['twoWin', 18], ['_', 4]]} />
					{[1, 2, 3, 4, 5, 6, 7, 8].map((n) => (
						<PageBtn key={n} $on={n === 1}>{n}</PageBtn>
					))}
					<ToolSlots items={[['|', 10], ['gear', 18], ['check', 18], ['|', 5], ['*axis', 18], ['crossDot', 19], ['circArrow', 19], ['circTick', 17], ['twoCirc', 20], ['snakeA', 18], ['snakeB', 19], ['peak', 17], ['branch', 20]]} />
				</Band>
				<Band $w={253} $ml={2} $pb={2}>
					<ToolSlots items={[[':', 4], ['*xYellow', 18], ['curveA', 25], ['*boxCurve', 18], ['slash', 19], ['target', 18], ['gearBlue', 19], ['sCurve', 18], ['xBlue', 19], ['arcBase', 19], ['arcTop', 19], ['perp', 19], ['perpDot', 19], ['square4', 18]]} />
				</Band>
			</ToolRow>
			<StatusBar>
				<Prompt>Construct Minimum Dist Line &gt; Accept, Identify 2nd element/I</Prompt>
				<StatusGrip />
				<StatusBox />
				<StatusText $ml={1}>Circle, Level: Scratch-1</StatusText>
				<StatusCell $w={24} $first><Ico n="curveStatus" s={17} /></StatusCell>
				<StatusCell $w={24}><Ico n="padlock" s={11} /></StatusCell>
				<StatusCell $w={90} />
				<StatusCell $w={145}>641.0342, 187.3733</StatusCell>
				<StatusCell $w={24} />
			</StatusBar>
			<Taskbar>
				<StartOrb>
					<svg width="15" height="14" viewBox="0 0 15 14">
						<path d="M1 2l6-1v5.5H1z" fill="#e5542c" />
						<path d="M8 1l6 1v4.5H8z" fill="#8dc63f" />
						<path d="M1 7.5h6V13l-6-1z" fill="#2d9fe0" />
						<path d="M8 7.5h6V12l-6 1z" fill="#f4c531" />
					</svg>
				</StartOrb>
				<TaskSlot $w={32} $ml={11}><Ico n="ie" /></TaskSlot>
				<TaskSlot $w={36}><Ico n="explorer" /></TaskSlot>
				<TaskSlot $w={30}><Ico n="media" /></TaskSlot>
				<TaskSlot $w={35}><Ico n="trayPic" /></TaskSlot>
				<TaskBtn><Ico n="pinned1" /></TaskBtn>
				<TaskBtn><Ico n="pinned2" /></TaskBtn>
				<TaskBtn $bright><Ico n="pinned3" /></TaskBtn>
				<TaskBtn><Ico n="pinned4" /></TaskBtn>
				<TaskBtn><Ico n="pinned5" /></TaskBtn>
				<TrayArrow />
				<TaskSlot $w={20} $ml={6}><Ico n="power" /></TaskSlot>
				<TaskSlot $w={20}><Ico n="flag" /></TaskSlot>
				<TaskSlot $w={20}><Ico n="speaker" /></TaskSlot>
				<TaskSlot $w={20}><Ico n="network" /></TaskSlot>
				<Clock>9:20 AM</Clock>
				<ShowDesktop />
			</Taskbar>
		</Shell>
	);
}
